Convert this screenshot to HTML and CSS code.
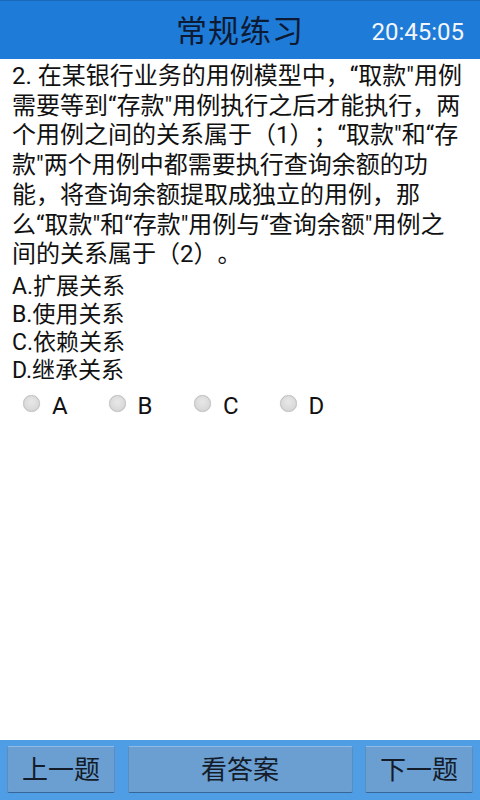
FILE: index.html
```html
<!DOCTYPE html>
<html lang="zh-CN">
<head>
<meta charset="utf-8">
<title>常规练习</title>
<link rel="stylesheet" href="styles.css">
</head>
<body>
<div class="screen">
  <header class="topbar">
    <span class="spacer"></span>
    <h1 class="title">常规练习</h1>
    <span class="clock">20:45:05</span>
  </header>
  <main class="content">
    <p class="question">2. 在某银行业务的用例模型中，“取款"用例<br>需要等到“存款"用例执行之后才能执行，两<br>个用例之间的关系属于（1）；“取款"和“存<br>款"两个用例中都需要执行查询余额的功<br>能，将查询余额提取成独立的用例，那<br>么“取款"和“存款"用例与“查询余额"用例之<br>间的关系属于（2）。</p>
    <ul class="options">
      <li>A.扩展关系</li>
      <li>B.使用关系</li>
      <li>C.依赖关系</li>
      <li>D.继承关系</li>
    </ul>
    <div class="radios">
      <label class="radio"><span class="dot"></span><span class="letter">A</span></label>
      <label class="radio"><span class="dot"></span><span class="letter">B</span></label>
      <label class="radio"><span class="dot"></span><span class="letter">C</span></label>
      <label class="radio"><span class="dot"></span><span class="letter">D</span></label>
    </div>
  </main>
  <footer class="bottombar">
    <button class="btn">上一题</button>
    <button class="btn">看答案</button>
    <button class="btn">下一题</button>
  </footer>
</div>
</body>
</html>
```

FILE: styles.css
```css
html, body {
  margin: 0;
  padding: 0;
  background: #ffffff;
}

body {
  font-family: Roboto, "Noto Sans CJK SC", sans-serif;
  color: #111111;
  text-spacing-trim: space-all;
}

.screen {
  width: 480px;
  height: 800px;
  display: flex;
  flex-direction: column;
  overflow: hidden;
}

.topbar {
  height: 59px;
  flex: 0 0 59px;
  background: #1f7bd8;
  border-top: 1px solid #1a68b8;
  box-sizing: border-box;
  display: grid;
  grid-template-columns: 1fr auto 1fr;
  align-items: center;
}

.title {
  margin: 0;
  font-size: 31px;
  font-weight: normal;
  color: #0d1a33;
  letter-spacing: 1px;
  line-height: 1;
  padding-top: 2px;
}

.clock {
  justify-self: end;
  padding-right: 16px;
  font-size: 24px;
  color: #f2f6fb;
  padding-top: 3px;
}

.content {
  flex: 1;
  padding: 3px 8px 0 12px;
}

.question {
  margin: 0;
  font-size: 24px;
  line-height: 29.7px;
  white-space: nowrap;
  color: #111111;
}

.options {
  list-style: none;
  margin: 3px 0 0 0;
  padding: 0;
  font-size: 23px;
  line-height: 28px;
}

.radios {
  display: flex;
  padding: 3px 0 0 11px;
  align-items: center;
}

.radio {
  width: 85.5px;
  display: flex;
  align-items: center;
  gap: 12px;
  height: 32px;
}

.dot {
  width: 15px;
  height: 15px;
  border-radius: 50%;
  background: radial-gradient(circle at 50% 40%, #e8e8e8 0%, #d8d8d8 70%, #cfcfcf 100%);
  border: 1px solid #bdbdbd;
  box-shadow: 0 0 1px #d0d0d0;
  flex: 0 0 auto;
  margin-top: 0;
}

.letter {
  font-size: 24px;
  color: #111111;
  line-height: 1;
  padding-top: 4px;
}

.bottombar {
  flex: 0 0 60px;
  height: 60px;
  box-sizing: border-box;
  background: #4f9de4;
  display: grid;
  grid-template-columns: 108px 1fr 108px;
  gap: 12.5px;
  padding: 6px 7px 7px 7px;
}

.btn {
  margin: 0;
  font-family: Roboto, "Noto Sans CJK SC", sans-serif;
  font-size: 26px;
  color: #141c2a;
  background: #6b9fd1;
  border: 1px solid #5a8dc0;
  border-top-color: #8fbbe4;
  border-bottom-color: #36679a;
  border-radius: 2px;
  padding: 0;
  line-height: 1;
}
```
